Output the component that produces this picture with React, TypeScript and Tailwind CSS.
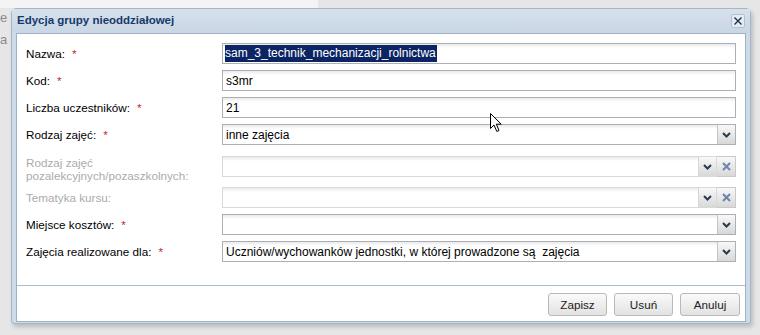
import React from "react";

type Kind = "text" | "select" | "clear";

type Field = {
  label: string;
  required?: boolean;
  disabled?: boolean;
  kind: Kind;
  value?: string;
  selected?: boolean;
  twoLine?: boolean;
  mt: string;
};

const fields: Field[] = [
  { label: "Nazwa:", required: true, kind: "text", value: "sam_3_technik_mechanizacji_rolnictwa", selected: true, mt: "mt-[9px]" },
  { label: "Kod:", required: true, kind: "text", value: "s3mr", mt: "mt-[6px]" },
  { label: "Liczba uczestników:", required: true, kind: "text", value: "21", mt: "mt-[6px]" },
  { label: "Rodzaj zajęć:", required: true, kind: "select", value: "inne zajęcia", mt: "mt-[6px]" },
  { label: "Rodzaj zajęć pozalekcyjnych/pozaszkolnych:", disabled: true, kind: "clear", twoLine: true, mt: "mt-[11px]" },
  { label: "Tematyka kursu:", disabled: true, kind: "clear", mt: "mt-[5px]" },
  { label: "Miejsce kosztów:", required: true, kind: "select", mt: "mt-[6px]" },
  {
    label: "Zajęcia realizowane dla:",
    required: true,
    kind: "select",
    value: "Uczniów/wychowanków jednostki, w której prowadzone są  zajęcia",
    mt: "mt-[6px]",
  },
];

function Chevron() {
  return (
    <svg width="9" height="6" viewBox="0 0 9 6">
      <path d="M1 1 L4.5 4.5 L8 1" fill="none" stroke="#2b3a4f" strokeWidth="2" />
    </svg>
  );
}

function Trigger({ disabled }: { disabled?: boolean }) {
  return (
    <div
      className={`w-[18px] h-full flex items-center justify-center border-l bg-[linear-gradient(to_bottom,#f8f8f8,#d8d8d8)] ${
        disabled ? "border-[#d6d6d6]" : "border-[#c4c4c4]"
      }`}
    >
      <Chevron />
    </div>
  );
}

function Row({ f }: { f: Field }) {
  const labelColor = f.disabled ? "text-[#ababab]" : "text-black";
  return (
    <div className={`flex ${f.twoLine ? "items-start" : "items-center"} ${f.mt}`}>
      <div className={`w-[196px] text-[11.7px] ${f.twoLine ? "leading-[13px]" : "leading-[21px]"} ${labelColor}`}>
        {f.twoLine ? (
          <>
            Rodzaj zajęć
            <br />
            pozalekcyjnych/pozaszkolnych:
          </>
        ) : (
          f.label
        )}
        {f.required && <span className="text-[#c0262b] ml-[7px]">*</span>}
      </div>
      <div className="flex flex-1 h-[21px]">
        <div
          className={`flex flex-1 h-full border bg-[linear-gradient(to_bottom,#eaeaea,#ffffff_4px)] ${
            f.disabled ? "border-[#d9d9d9]" : "border-[#acb0b6]"
          }`}
        >
          <div className="flex-1 flex items-center pl-[2px] text-[12px] text-black whitespace-pre overflow-hidden">
            {f.value &&
              (f.selected ? (
                <span className="bg-[#0b2463] text-white leading-[17px] pr-px">{f.value}</span>
              ) : (
                <span className="pl-px">{f.value}</span>
              ))}
          </div>
          {f.kind !== "text" && <Trigger disabled={f.disabled} />}
        </div>
        {f.kind === "clear" && (
          <div className="w-[19px] h-full flex items-center justify-center border border-l-0 border-[#c9c9c9] bg-[linear-gradient(to_bottom,#f8f8f8,#d8d8d8)]">
            <svg width="9" height="9" viewBox="0 0 9 9">
              <path d="M1 1 L8 8 M8 1 L1 8" stroke="#6a86a6" strokeWidth="2" />
            </svg>
          </div>
        )}
      </div>
    </div>
  );
}

function Button({ children, w }: { children: React.ReactNode; w: string }) {
  return (
    <button
      className={`${w} h-[23px] rounded-[3px] border border-[#b9b9b9] bg-[linear-gradient(to_bottom,#fafafa,#e2e2e2)] text-[11.7px] text-[#222]`}
    >
      {children}
    </button>
  );
}

export default function App() {
  return (
    <div className="relative w-[760px] h-[335px] overflow-hidden bg-[#e6e6e6] font-['Liberation_Sans',Arial,sans-serif]">
      {/* page behind the window */}
      <div className="absolute left-0 top-0 w-[318px] h-[8px] bg-[#f4f4f4]" />
      <div className="absolute left-0 top-[10px] text-[13px] text-[#8a8a8a] leading-[16px]">e</div>
      <div className="absolute left-0 top-[32px] text-[13px] text-[#8a8a8a] leading-[16px]">a r</div>

      <div className="absolute left-[11px] top-[8px] w-[740px] h-[316px] flex flex-col rounded-t-[5px] rounded-b-[3px] border border-[#a7b6c7] bg-[#cddae7] shadow-[2px_3px_4px_rgba(0,0,0,0.18)]">
        <div className="h-[24px] flex items-center justify-between pl-[5px] pr-[5px] bg-[linear-gradient(to_bottom,#d6e1ec,#c9d6e4)]">
          <span className="text-[11.5px] font-bold text-[#15396b]">Edycja grupy nieoddziałowej</span>
          <div className="w-[14px] h-[14px] flex items-center justify-center rounded-[2px] border border-[#b3c2d2] bg-[#e4ebf3]">
            <svg width="10" height="10" viewBox="0 0 10 10">
              <path d="M1.5 1.5 L8.5 8.5 M8.5 1.5 L1.5 8.5" stroke="#22324a" strokeWidth="1.4" />
            </svg>
          </div>
        </div>
        <div className="mx-[4px] mb-[1px] flex-1 flex flex-col border border-[#9fb1c4] bg-white">
          <div className="h-[251px] px-[9px] flex flex-col">
            {fields.map((f) => (
              <Row key={f.label} f={f} />
            ))}
          </div>
          <div className="flex-1 flex justify-end items-start gap-[7px] pt-[7px] pr-[5px] border-t border-[#aebdcc]">
            <Button w="w-[59px]">Zapisz</Button>
            <Button w="w-[59px]">Usuń</Button>
            <Button w="w-[60px]">Anuluj</Button>
          </div>
        </div>
      </div>

      {/* mouse pointer */}
      <svg className="absolute left-[490px] top-[113px]" width="13" height="20" viewBox="0 0 13 20">
        <path
          d="M0.5 0.5 L0.5 15.5 L4 12 L6.8 18.5 L9 17.5 L6.3 11.2 L11.2 11.2 Z"
          fill="#fff"
          stroke="#000"
          strokeWidth="1"
          strokeLinejoin="miter"
        />
      </svg>
    </div>
  );
}
